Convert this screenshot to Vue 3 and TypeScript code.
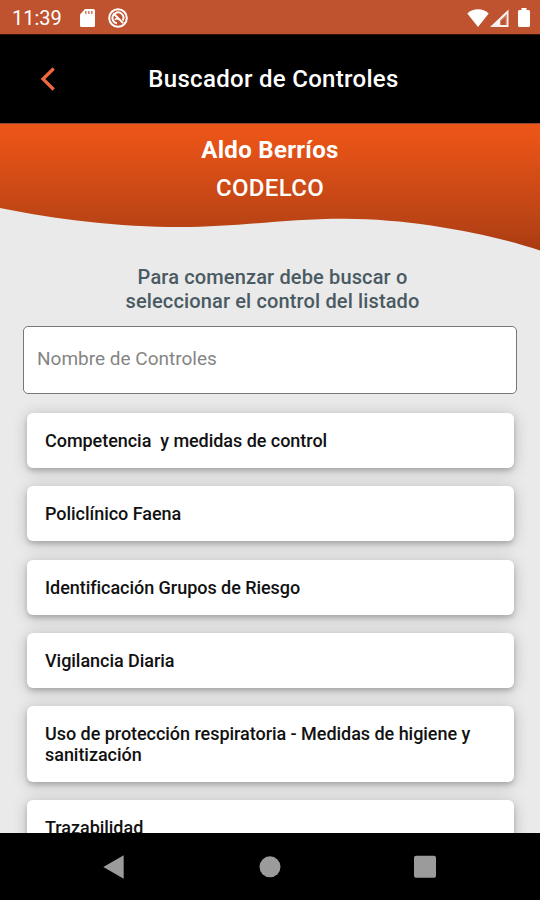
<script setup lang="ts">
import { ref } from 'vue'

const query = ref('')

const controls: string[] = [
  'Competencia  y medidas de control',
  'Policlínico Faena',
  'Identificación Grupos de Riesgo',
  'Vigilancia Diaria',
  'Uso de protección respiratoria - Medidas de higiene y sanitización',
  'Trazabilidad',
]
</script>

<template>
  <div class="screen">
    <div class="status">
      <span class="clock">11:39</span>
      <svg class="sd" width="15" height="18" viewBox="0 0 15 18">
        <path d="M5 0h8.500q1.500 0 1.500 1.500v15q0 1.500-1.500 1.500h-12Q0 18 0 16.500V5.500z" fill="#fff" />
        <path d="M5.800 2v3M8.800 2v3M11.800 2v3" stroke="#bf5330" stroke-opacity=".75" stroke-width="1.500" />
      </svg>
      <svg class="dnd" width="20" height="20" viewBox="0 0 20 20" fill="none" stroke="#fff">
        <circle cx="10" cy="10" r="8.800" stroke-width="2" />
        <path d="M5.700 6.500A5.300 5.300 0 0 0 9 15.200M7 5.500A5.300 5.300 0 0 1 14.600 12.600" stroke-width="1.900" />
        <path d="M5.300 5.300l9.800 9.800" stroke-width="2" />
        <path d="M7 11.800q1.500-2 3.500-.6" stroke-width="1.700" />
      </svg>
      <span class="spacer"></span>
      <svg class="wifi" width="22" height="18" viewBox="0 0 22 18">
        <path d="M.3 4.500Q5 .3 11 .3t10.700 4.200L11 18z" fill="#fff" />
      </svg>
      <svg class="cell" width="19" height="18" viewBox="0 0 19 18">
        <path fill-rule="evenodd" d="M18.500 .5v17.500H0zM16.800 5l-6.800 6.500v4.500h6.800z" fill="#fff" fill-opacity=".92" />
        <path d="M16.800 5l-6.800 6.500v4.500h1v-4L15.500 8v8h1.300z" fill="#fff" fill-opacity=".3" />
      </svg>
      <svg class="battery" width="12" height="19" viewBox="0 0 12 19">
        <path d="M3.500 0h5v2h2Q12 2 12 3.500v14q0 1.500-1.500 1.500h-9Q0 19 0 17.500v-14Q0 2 1.500 2h2z" fill="#fff" />
      </svg>
    </div>

    <header class="appbar">
      <svg class="back" width="16" height="24" viewBox="0 0 16 24">
        <path d="M13.700 1.500L3 12l10.700 10.500" fill="none" stroke="#f2683c" stroke-width="3.200" />
      </svg>
      <h1 class="title">Buscador de Controles</h1>
    </header>

    <section class="hero">
      <svg class="wave" width="540" height="128" viewBox="0 0 540 128">
        <defs>
          <linearGradient id="ember" x1="0" y1="0" x2="0" y2="1">
            <stop offset="0" stop-color="#ed5518" />
            <stop offset=".14" stop-color="#e75317" />
            <stop offset=".8" stop-color="#b94315" />
            <stop offset="1" stop-color="#aa3a12" />
          </linearGradient>
        </defs>
        <path d="M0 0H540V127.500C490 111 415 96 345 95.700C285 95.500 240 104 180 104C120 104 55 96.500 0 85z" fill="url(#ember)" />
        <path d="M0 0H540V1H0z" fill="#8a4a33" />
      </svg>
      <div class="names">
        <div class="user">Aldo Berríos</div>
        <div class="company">CODELCO</div>
      </div>
    </section>

    <main class="content">
      <p class="prompt">Para comenzar debe buscar o<br />seleccionar el control del listado</p>
      <input v-model="query" class="search" type="text" placeholder="Nombre de Controles" />
      <ul class="list">
        <li v-for="name in controls" :key="name" class="card">{{ name }}</li>
      </ul>
    </main>

    <nav class="navbar">
      <svg width="22" height="24" viewBox="0 0 22 24">
        <path d="M20.700 .3v23.400L.3 12z" fill="#9b9b9b" />
      </svg>
      <svg width="22" height="24" viewBox="0 0 22 24">
        <circle cx="11" cy="11.800" r="10.500" fill="#9b9b9b" />
      </svg>
      <svg width="22" height="24" viewBox="0 0 22 24">
        <rect x="0" y=".7" width="22" height="22" rx="2" fill="#9b9b9b" />
      </svg>
    </nav>
  </div>
</template>

<style>
body {
  margin: 0;
  background: #eaeaea;
}
</style>

<style scoped>
.screen {
  width: 540px;
  height: 900px;
  display: flex;
  flex-direction: column;
  overflow: hidden;
  background: #eaeaea;
  font-family: Roboto, "Liberation Sans", sans-serif;
}
.status {
  flex: none;
  box-sizing: border-box;
  height: 34px;
  padding: 1px 10px 0 12px;
  display: flex;
  align-items: center;
  background: #bf5330;
  color: #fff;
}
.clock {
  width: 68px;
  font-size: 20px;
}
.dnd {
  margin-left: 13px;
}
.spacer {
  flex: 1;
}
.cell {
  margin-left: 1px;
}
.battery {
  margin-left: 9px;
}
.appbar {
  flex: none;
  height: 89px;
  border-top: 1px solid #3a1408;
  box-sizing: border-box;
  padding: 0 53px 0 40px;
  display: flex;
  align-items: center;
  background: #000;
}
.title {
  flex: 1;
  margin: 0 0 0 4px;
  text-align: center;
  color: #fff;
  font-size: 24px;
  font-weight: 500;
  line-height: 28px;
  letter-spacing: 0.3px;
}
.hero {
  flex: none;
  position: relative;
  height: 128px;
}
.wave {
  position: absolute;
  inset: 0;
}
.names {
  position: relative;
  padding: 8px 0 0;
  text-align: center;
  color: #fff;
  line-height: 38px;
  font-size: 24px;
  font-weight: 500;
  letter-spacing: 0.3px;
}
.user {
  font-weight: 700;
}
.content {
  flex: 1;
  min-height: 0;
  overflow: hidden;
  padding: 14px 23px 0;
}
.prompt {
  margin: 0;
  padding-left: 5px;
  text-align: center;
  color: #4a5a63;
  font-size: 20px;
  font-weight: 500;
  line-height: 24px;
  letter-spacing: 0.14px;
}
.search {
  display: block;
  box-sizing: border-box;
  width: 100%;
  height: 68px;
  margin: 13px 0 0;
  padding: 0 13px 4px;
  border: 1px solid #787878;
  border-radius: 5px;
  outline: none;
  background: #fff;
  color: #222;
  font-family: inherit;
  font-size: 19px;
}
.search::placeholder {
  color: #858585;
  opacity: 1;
}
.list {
  margin: 0;
  padding: 19.400px 3.500px 0 4px;
  list-style: none;
  display: flex;
  flex-direction: column;
  gap: 18.100px;
}
.card {
  padding: 17px 18px;
  border-radius: 6px;
  background: #fff;
  box-shadow: 0 3px 5px rgba(0, 0, 0, 0.18), 0 2px 16px rgba(0, 0, 0, 0.2);
  color: #111;
  font-size: 18px;
  font-weight: 500;
  line-height: 21px;
  letter-spacing: -0.04px;
  white-space: pre-wrap;
}
.navbar {
  flex: none;
  box-sizing: border-box;
  height: 67px;
  padding: 0 104px 0 103px;
  display: flex;
  align-items: center;
  justify-content: space-between;
  background: #000;
}
</style>
